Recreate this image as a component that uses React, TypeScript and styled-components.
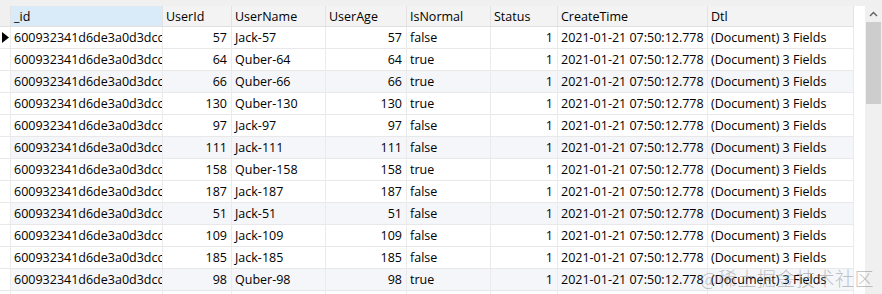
import React from "react";
import styled, { createGlobalStyle, css } from "styled-components";

const Global = createGlobalStyle`
  html, body { margin: 0; padding: 0; background: #ffffff; }
  body { font-family: "Open Sans", "Noto Sans", "Liberation Sans", sans-serif; }
`;

const COLS = "11px 152px 69px 94px 81px 84px 67px 150px 146px";

const Page = styled.div`
  position: relative;
  width: 882px;
  height: 294px;
  overflow: hidden;
  background: #ffffff;
  display: flex;
  flex-direction: column;
`;

const TopBand = styled.div`
  height: 6px;
  flex: none;
  background: #f0f0f0;
`;

const Main = styled.div`
  flex: 1;
  display: flex;
  min-height: 0;
`;

const Grid = styled.div`
  width: 855px;
  flex: none;
  display: grid;
  grid-template-columns: ${COLS};
  grid-auto-rows: 22px;
  grid-template-rows: 21px;
  align-content: start;
  font-size: 12.5px;
  color: #000;
`;

const Spacer = styled.div`
  flex: 1;
`;

const HeaderCell = styled.div<{ $selected?: boolean; $blank?: boolean }>`
  box-sizing: border-box;
  height: 21px;
  padding: 0 3px;
  display: flex;
  align-items: center;
  white-space: nowrap;
  overflow: hidden;
  background: ${(p) => (p.$selected ? "#d9eaf8" : "#f3f3f3")};
  border-right: 1px solid #e3e3e3;
  border-bottom: 1px solid #e0e0e0;
  ${(p) =>
    p.$blank &&
    css`
      background: #f0f0f0;
    `}
`;

const Cell = styled.div<{ $right?: boolean; $tint?: boolean }>`
  box-sizing: border-box;
  height: 22px;
  padding: 0 4px 0 3px;
  display: flex;
  align-items: center;
  justify-content: ${(p) => (p.$right ? "flex-end" : "flex-start")};
  white-space: nowrap;
  overflow: hidden;
  background: ${(p) => (p.$tint ? "#f4f6f9" : "#ffffff")};
  border-right: 1px solid #ebebeb;
  border-bottom: 1px solid #e8e8e8;
`;

const Indicator = styled(Cell)`
  padding: 0;
  justify-content: center;
`;

const Scrollbar = styled.div`
  width: 17px;
  flex: none;
  background: #f0f0f0;
  display: flex;
  flex-direction: column;
  align-items: center;
`;

const ArrowButton = styled.div`
  height: 16px;
  width: 17px;
  display: flex;
  align-items: center;
  justify-content: center;
`;

const Thumb = styled.div`
  width: 15px;
  height: 82px;
  background: #cdcdcd;
`;

const Watermark = styled.div`
  position: absolute;
  right: 8px;
  bottom: 3px;
  font-family: "Noto Sans CJK SC", "Noto Sans", sans-serif;
  font-size: 19px;
  font-weight: 300;
  color: rgba(110, 110, 110, 0.42);
  white-space: nowrap;
  pointer-events: none;
  letter-spacing: 0.5px;
`;

type Row = { uid: number; name: string; age: number; normal: boolean };

const rows: Row[] = [
  { uid: 57, name: "Jack-57", age: 57, normal: false },
  { uid: 64, name: "Quber-64", age: 64, normal: true },
  { uid: 66, name: "Quber-66", age: 66, normal: true },
  { uid: 130, name: "Quber-130", age: 130, normal: true },
  { uid: 97, name: "Jack-97", age: 97, normal: false },
  { uid: 111, name: "Jack-111", age: 111, normal: false },
  { uid: 158, name: "Quber-158", age: 158, normal: true },
  { uid: 187, name: "Jack-187", age: 187, normal: false },
  { uid: 51, name: "Jack-51", age: 51, normal: false },
  { uid: 109, name: "Jack-109", age: 109, normal: false },
  { uid: 185, name: "Jack-185", age: 185, normal: false },
  { uid: 98, name: "Quber-98", age: 98, normal: true },
  { uid: 142, name: "Quber-142", age: 142, normal: true },
];

const headers = ["_id", "UserId", "UserName", "UserAge", "IsNormal", "Status", "CreateTime", "Dtl"];

export default function App() {
  return (
    <>
      <Global />
      <Page>
        <TopBand />
        <Main>
          <Grid>
            <HeaderCell $blank />
            {headers.map((h, i) => (
              <HeaderCell key={h} $selected={i === 0}>
                {h}
              </HeaderCell>
            ))}
            {rows.map((r, i) => {
              const tint = i % 3 === 2;
              return (
                <React.Fragment key={i}>
                  <Indicator $tint={false}>
                    {i === 0 && (
                      <svg width="7" height="11" viewBox="0 0 7 11">
                        <polygon points="0,0 7,5.5 0,11" fill="#000" />
                      </svg>
                    )}
                  </Indicator>
                  <Cell $tint={tint}>600932341d6de3a0d3dcc5a1</Cell>
                  <Cell $tint={tint} $right>{r.uid}</Cell>
                  <Cell $tint={tint}>{r.name}</Cell>
                  <Cell $tint={tint} $right>{r.age}</Cell>
                  <Cell $tint={tint}>{r.normal ? "true" : "false"}</Cell>
                  <Cell $tint={tint} $right>1</Cell>
                  <Cell $tint={tint}>2021-01-21 07:50:12.778</Cell>
                  <Cell $tint={tint}>(Document) 3 Fields</Cell>
                </React.Fragment>
              );
            })}
          </Grid>
          <Spacer />
          <Scrollbar>
            <ArrowButton>
              <svg width="9" height="6" viewBox="0 0 9 6">
                <polyline points="1,5 4.5,1.5 8,5" fill="none" stroke="#606060" strokeWidth="1.4" />
              </svg>
            </ArrowButton>
            <Thumb />
          </Scrollbar>
        </Main>
        <Watermark>@稀土掘金技术社区</Watermark>
      </Page>
    </>
  );
}
